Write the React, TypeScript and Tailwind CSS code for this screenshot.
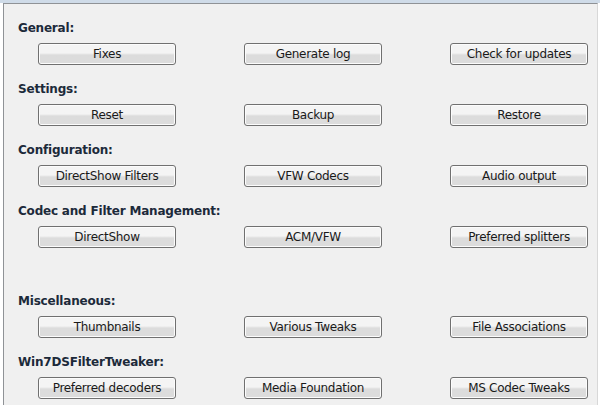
import React from "react";

const sections = [
  { title: "General:", buttons: ["Fixes", "Generate log", "Check for updates"] },
  { title: "Settings:", buttons: ["Reset", "Backup", "Restore"] },
  { title: "Configuration:", buttons: ["DirectShow Filters", "VFW Codecs", "Audio output"] },
  { title: "Codec and Filter Management:", buttons: ["DirectShow", "ACM/VFW", "Preferred splitters"] },
  { title: "Miscellaneous:", buttons: ["Thumbnails", "Various Tweaks", "File Associations"], spaced: true },
  { title: "Win7DSFilterTweaker:", buttons: ["Preferred decoders", "Media Foundation", "MS Codec Tweaks"] },
];

function WinButton({ label }: { label: string }) {
  return (
    <button className="h-[22px] w-[138px] rounded-[3px] border border-[#707070] bg-linear-to-b from-[#f4f4f4] from-45% to-[#dcdcdc] to-55% text-[12px] leading-none tracking-[-0.3px] text-[#1a1a1a] shadow-[inset_0_0_0_1px_#fcfcfc]">
      {label}
    </button>
  );
}

export default function App() {
  return (
    <div className="flex h-[415px] w-[600px] flex-col bg-white font-['DejaVu_Sans',sans-serif]">
      {/* window frame strip */}
      <div className="h-[3px] bg-[#cfdbe8]" />
      <div className="ml-[3px] mr-[2px] flex h-[402px] flex-col border-t border-l border-r border-[#8f9296] border-r-[#d8d8d8] bg-[#f0f0f0] pt-[16px]">
        {sections.map((section) => (
          <div key={section.title} className={section.spaced ? "mt-[29px]" : ""}>
            <div className="pl-[14px] text-[12px] leading-[16px] font-bold tracking-[-0.2px] text-[#1c2a3a]">
              {section.title}
            </div>
            <div className="mt-[7px] mb-[16px] flex gap-[68px] pl-[34px]">
              {section.buttons.map((b) => (
                <WinButton key={b} label={b} />
              ))}
            </div>
          </div>
        ))}
      </div>
    </div>
  );
}
